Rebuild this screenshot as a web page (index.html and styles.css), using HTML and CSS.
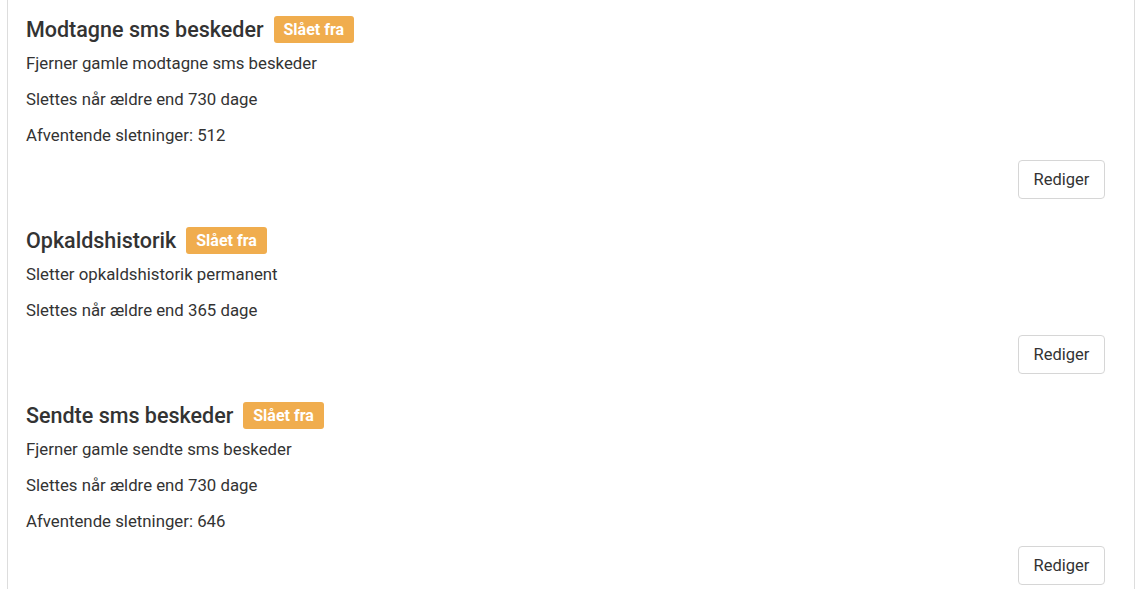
FILE: index.html
```html
<!DOCTYPE html>
<html>
<head>
<meta charset="UTF-8">
<title>Oprydning</title>
<link rel="stylesheet" href="styles.css">
</head>
<body>
<div class="panel">
<div class="job">
<div class="job-head">
<h4>Modtagne sms beskeder</h4>
<span class="badge">Slået fra</span>
</div>
<p>Fjerner gamle modtagne sms beskeder</p>
<p>Slettes når ældre end 730 dage</p>
<p>Afventende sletninger: 512</p>
<div class="actions"><button class="btn">Rediger</button></div>
</div>
<div class="job">
<div class="job-head">
<h4>Opkaldshistorik</h4>
<span class="badge">Slået fra</span>
</div>
<p>Sletter opkaldshistorik permanent</p>
<p>Slettes når ældre end 365 dage</p>
<div class="actions"><button class="btn">Rediger</button></div>
</div>
<div class="job">
<div class="job-head">
<h4>Sendte sms beskeder</h4>
<span class="badge">Slået fra</span>
</div>
<p>Fjerner gamle sendte sms beskeder</p>
<p>Slettes når ældre end 730 dage</p>
<p>Afventende sletninger: 646</p>
<div class="actions"><button class="btn">Rediger</button></div>
</div>
</div>
</body>
</html>
```
FILE: styles.css
```css
html,body{
margin:0;
padding:0;
background:#fff;
}
body{
font-family:Roboto,"Liberation Sans",sans-serif;
color:#333;
}
.panel{
margin-left:7px;
width:1128px;
min-height:589px;
border-left:1px solid #ddd;
border-right:1px solid #ddd;
padding:16px 29px 0 18px;
box-sizing:border-box;
}
.job{
margin-bottom:28px;
}
.job-head{
display:flex;
align-items:center;
height:27px;
margin-bottom:8px;
}
.job-head h4{
margin:0;
font-size:21.5px;
font-weight:500;
color:#333;
}
.badge{
margin-left:10px;
background:#f0ad4e;
color:#fff;
font-size:16px;
font-weight:700;
height:27px;
line-height:28px;
padding:0 10px;
border-radius:3px;
}
.job p{
margin:0 0 12px;
font-size:16.8px;
line-height:24px;
}
.actions{
display:flex;
justify-content:flex-end;
margin-top:13px;
}
.btn{
width:87px;
height:39px;
background:#fff;
border:1px solid #d6d6d6;
border-radius:4px;
font-family:Roboto,"Liberation Sans",sans-serif;
font-size:16.5px;
color:#333;
cursor:pointer;
}
```
